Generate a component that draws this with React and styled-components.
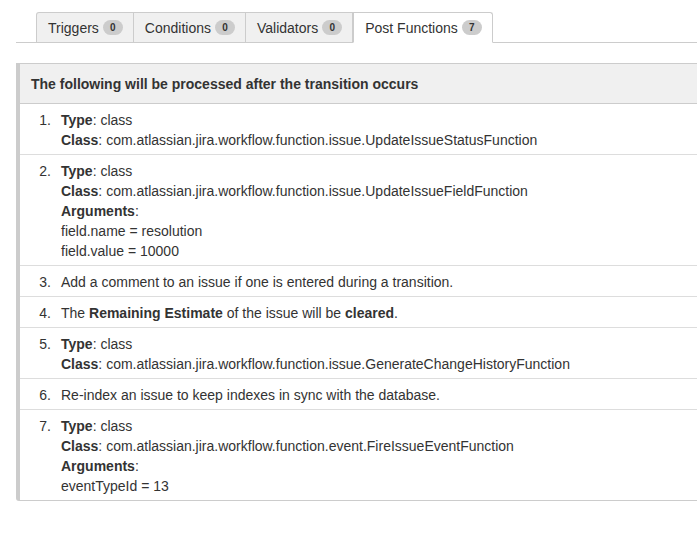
import React from "react";
import styled, { createGlobalStyle } from "styled-components";

const GlobalStyle = createGlobalStyle`
  html, body {
    margin: 0;
    padding: 0;
    background: #fff;
  }
  body {
    font-family: Arial, "Liberation Sans", Helvetica, sans-serif;
    font-size: 14px;
    color: #333;
  }
`;

const Page = styled.div`
  padding: 12px 0 0 16px;
  width: 697px;
  box-sizing: border-box;
`;

const TabBar = styled.ul`
  display: flex;
  list-style: none;
  margin: 0;
  padding: 0 0 0 20px;
  border-bottom: 1px solid #ccc;
  height: 30px;
`;

const Tab = styled.li`
  display: flex;
  align-items: center;
  gap: 4px;
  box-sizing: border-box;
  padding: 0 10px 0 11px;
  border: 1px solid #ccc;
  border-left: ${(p) => (p.first || p.active ? "1px solid #ccc" : "none")};
  border-bottom: ${(p) => (p.active ? "1px solid #fff" : "none")};
  border-radius: ${(p) => (p.first ? "3px 0 0 0" : p.active ? "0 3px 0 0" : "0")};
  background: ${(p) => (p.active ? "#fff" : "#f0f0f0")};
  height: ${(p) => (p.active ? "31px" : "30px")};
  color: #333;
  font-size: 14px;
  cursor: pointer;
`;

const Badge = styled.span`
  display: inline-flex;
  align-items: center;
  justify-content: center;
  min-width: 20px;
  height: 15px;
  padding: 0 4px;
  box-sizing: border-box;
  border-radius: 8px;
  background: #ccc;
  color: #333;
  font-size: 10px;
  font-weight: bold;
`;

const Panel = styled.div`
  margin-top: 20px;
  border-left: 4px solid #ccc;
  border-bottom: 1px solid #ccc;
  border-radius: 0 0 0 3px;
`;

const PanelHeader = styled.div`
  background: #f0f0f0;
  border-top: 1px solid #ccc;
  border-bottom: 1px solid #ccc;
  padding: 0 11px;
  height: 41px;
  box-sizing: border-box;
  display: flex;
  align-items: center;
  font-weight: bold;
`;

const List = styled.ol`
  margin: 0;
  padding: 0;
  list-style: none;
`;

const Item = styled.li`
  display: flex;
  padding: 6px 0 4px;
  line-height: 20px;
  border-top: ${(p) => (p.first ? "none" : "1px solid #ddd")};
`;

const Num = styled.span`
  width: 31px;
  flex: none;
  text-align: right;
  padding-right: 10px;
`;

const Body = styled.div`
  display: flex;
  flex-direction: column;
`;

const tabs = [
  { label: "Triggers", count: 0 },
  { label: "Conditions", count: 0 },
  { label: "Validators", count: 0 },
  { label: "Post Functions", count: 7, active: true },
];

const App = () => {
  return (
    <>
      <GlobalStyle />
      <Page>
        <TabBar>
          {tabs.map((t, i) => (
            <Tab key={t.label} first={i === 0} active={t.active}>
              {t.label}
              <Badge>{t.count}</Badge>
            </Tab>
          ))}
        </TabBar>
        <Panel>
          <PanelHeader>The following will be processed after the transition occurs</PanelHeader>
          <List>
            <Item first>
              <Num>1.</Num>
              <Body>
                <div><b>Type</b>: class</div>
                <div><b>Class</b>: com.atlassian.jira.workflow.function.issue.UpdateIssueStatusFunction</div>
              </Body>
            </Item>
            <Item>
              <Num>2.</Num>
              <Body>
                <div><b>Type</b>: class</div>
                <div><b>Class</b>: com.atlassian.jira.workflow.function.issue.UpdateIssueFieldFunction</div>
                <div><b>Arguments</b>:</div>
                <div>field.name = resolution</div>
                <div>field.value = 10000</div>
              </Body>
            </Item>
            <Item>
              <Num>3.</Num>
              <Body>
                <div>Add a comment to an issue if one is entered during a transition.</div>
              </Body>
            </Item>
            <Item>
              <Num>4.</Num>
              <Body>
                <div>The <b>Remaining Estimate</b> of the issue will be <b>cleared</b>.</div>
              </Body>
            </Item>
            <Item>
              <Num>5.</Num>
              <Body>
                <div><b>Type</b>: class</div>
                <div><b>Class</b>: com.atlassian.jira.workflow.function.issue.GenerateChangeHistoryFunction</div>
              </Body>
            </Item>
            <Item>
              <Num>6.</Num>
              <Body>
                <div>Re-index an issue to keep indexes in sync with the database.</div>
              </Body>
            </Item>
            <Item>
              <Num>7.</Num>
              <Body>
                <div><b>Type</b>: class</div>
                <div><b>Class</b>: com.atlassian.jira.workflow.function.event.FireIssueEventFunction</div>
                <div><b>Arguments</b>:</div>
                <div>eventTypeId = 13</div>
              </Body>
            </Item>
          </List>
        </Panel>
      </Page>
    </>
  );
};

export default App;
